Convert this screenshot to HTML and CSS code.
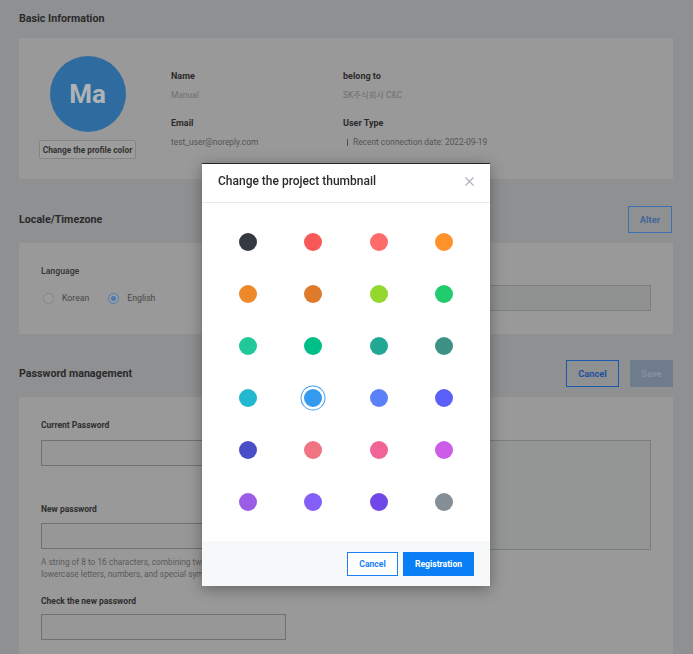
FILE: index.html
```html
<!DOCTYPE html>
<html lang="en">
<head>
<meta charset="utf-8">
<title>My Account</title>
<link rel="stylesheet" href="styles.css">
</head>
<body>
<div class="page">
  <section class="section">
    <div class="section-head first"><h2>Basic Information</h2></div>
    <div class="panel profile">
      <div class="avatar-col">
        <div class="avatar">Ma</div>
        <button class="btn-profile">Change the profile color</button>
      </div>
      <dl class="info">
        <div class="info-item"><dt>Name</dt><dd class="muted">Manual</dd></div>
        <div class="info-item"><dt>belong to</dt><dd class="muted">SK주식회사 C&amp;C</dd></div>
        <div class="info-item"><dt>Email</dt><dd>test_user@noreply.com</dd></div>
        <div class="info-item"><dt>User Type</dt><dd><span class="sep"></span>Recent connection date: 2022-09-19</dd></div>
      </dl>
    </div>
  </section>

  <section class="section">
    <div class="section-head"><h2>Locale/Timezone</h2><button class="btn-outline btn-alter">Alter</button></div>
    <div class="panel locale">
      <div class="col">
        <div class="label-plain">Language</div>
        <div class="radios">
          <label class="radio"><span class="radio-circle"></span><span>Korean</span></label>
          <label class="radio checked"><span class="radio-circle"><span class="radio-dot"></span></span><span>English</span></label>
        </div>
      </div>
      <div class="col">
        <div class="label-plain">Timezone</div>
        <div class="select-box"></div>
      </div>
    </div>
  </section>

  <section class="section">
    <div class="section-head"><h2>Password management</h2>
      <div class="head-actions">
        <button class="btn-outline btn-cancel">Cancel</button>
        <button class="btn-save">Save</button>
      </div>
    </div>
    <div class="panel password">
      <div class="col">
        <div class="field">
          <div class="field-label">Current Password</div>
          <div class="input"></div>
        </div>
        <div class="field field-new">
          <div class="field-label">New password</div>
          <div class="input"></div>
          <p class="hint">A string of 8 to 16 characters, combining two or more of uppercase,<br>lowercase letters, numbers, and special symbols.</p>
        </div>
        <div class="field field-check">
          <div class="field-label">Check the new password</div>
          <div class="input"></div>
        </div>
      </div>
      <div class="col">
        <div class="field-label">Guide</div>
        <div class="guide-box"></div>
      </div>
    </div>
  </section>
</div>

<div class="modal" role="dialog" aria-label="Change the project thumbnail">
  <div class="modal-head">
    <h3>Change the project thumbnail</h3>
    <svg class="close" width="9" height="9" viewBox="0 0 9 9" aria-hidden="true"><path d="M0.5 0.5L8.5 8.5M8.5 0.5L0.5 8.5" stroke="#a9b0b8" stroke-width="1.1" fill="none"/></svg>
  </div>
  <div class="modal-body">
    <span class="swatch"><span class="dot" style="background:#343a40"></span></span>
    <span class="swatch"><span class="dot" style="background:#f95858"></span></span>
    <span class="swatch"><span class="dot" style="background:#ff6b6b"></span></span>
    <span class="swatch"><span class="dot" style="background:#ff922b"></span></span>

    <span class="swatch"><span class="dot" style="background:#ed892b"></span></span>
    <span class="swatch"><span class="dot" style="background:#df7a2b"></span></span>
    <span class="swatch"><span class="dot" style="background:#94d82d"></span></span>
    <span class="swatch"><span class="dot" style="background:#21cc6e"></span></span>

    <span class="swatch"><span class="dot" style="background:#20c997"></span></span>
    <span class="swatch"><span class="dot" style="background:#00be87"></span></span>
    <span class="swatch"><span class="dot" style="background:#22a892"></span></span>
    <span class="swatch"><span class="dot" style="background:#3d9285"></span></span>

    <span class="swatch"><span class="dot" style="background:#22b8cf"></span></span>
    <span class="swatch"><span class="dot selected" style="background:#339af0"></span></span>
    <span class="swatch"><span class="dot" style="background:#5c80fa"></span></span>
    <span class="swatch"><span class="dot" style="background:#5c60fa"></span></span>

    <span class="swatch"><span class="dot" style="background:#4a4fc8"></span></span>
    <span class="swatch"><span class="dot" style="background:#f07482"></span></span>
    <span class="swatch"><span class="dot" style="background:#f06595"></span></span>
    <span class="swatch"><span class="dot" style="background:#cc5de8"></span></span>

    <span class="swatch"><span class="dot" style="background:#9b5de5"></span></span>
    <span class="swatch"><span class="dot" style="background:#845ef7"></span></span>
    <span class="swatch"><span class="dot" style="background:#7048e8"></span></span>
    <span class="swatch"><span class="dot" style="background:#868e96"></span></span>
  </div>
  <div class="modal-foot">
    <button class="mbtn mbtn-cancel">Cancel</button>
    <button class="mbtn mbtn-primary">Registration</button>
  </div>
</div>
</body>
</html>
```

FILE: styles.css
```css
html, body {
  margin: 0;
  height: 100%;
  overflow: hidden;
}
body {
  background: #8f9092;
  font-family: Roboto, "Noto Sans CJK KR", sans-serif;
  color: #2b2b2b;
}
button {
  font-family: Roboto, sans-serif;
  cursor: pointer;
  padding: 0;
}
.page {
  padding: 0 20px 0 19px;
}
.section + .section {
  margin-top: 27px;
}
.section:last-child {
  margin-top: 26px;
}
.section-head {
  display: flex;
  align-items: center;
  justify-content: space-between;
  height: 27px;
  margin-bottom: 10px;
}
.section-head.first {
  height: 24px;
  margin: 6px 0 8px;
}
h2 {
  margin: 0;
  font-size: 10.7px;
  font-weight: 700;
  color: #2a2a2a;
}
.panel {
  background: #999999;
}

/* profile */
.profile {
  display: flex;
  align-items: flex-start;
  padding: 18px 20px 20px 20px;
}
.avatar-col {
  display: flex;
  flex-direction: column;
  align-items: center;
  width: 97px;
}
.avatar {
  width: 76px;
  height: 76px;
  border-radius: 50%;
  background: #2e6b9f;
  color: #b0b3b6;
  font-size: 26px;
  font-weight: 700;
  display: flex;
  align-items: center;
  justify-content: center;
}
.btn-profile {
  margin-top: 8px;
  width: 97px;
  height: 19px;
  background: #9d9d9d;
  border: 1px solid #858585;
  border-radius: 2px;
  font-size: 8.3px;
  font-weight: 700;
  color: #333;
}
.info {
  margin: 14px 0 0 35px;
  display: grid;
  grid-template-columns: 172px 172px;
  row-gap: 16px;
}
.info dt {
  font-size: 9px;
  line-height: 12px;
  font-weight: 700;
  color: #2b2b2b;
}
.info dd {
  margin: 7px 0 0;
  font-size: 8.4px;
  line-height: 12px;
  color: #545454;
  display: flex;
  align-items: center;
}
.info dd.muted {
  color: #6f6f6f;
}
.sep {
  display: inline-block;
  width: 1px;
  height: 7px;
  background: #4d4d4d;
  margin: 0 5px 0 4px;
}

/* locale */
.locale {
  display: grid;
  grid-template-columns: 1fr 1fr;
  column-gap: 20px;
  align-items: start;
  padding: 22px 22px 23px;
}
.label-plain {
  font-size: 8.7px;
  line-height: 12px;
  font-weight: 500;
  color: #333;
}
.radios {
  display: flex;
  align-items: center;
  height: 14px;
  margin-top: 14px;
  padding-left: 2px;
}
.radio {
  display: flex;
  align-items: center;
  gap: 8px;
  margin-right: 19px;
  font-size: 8.7px;
  color: #474747;
}
.radio-circle {
  width: 11px;
  height: 11px;
  box-sizing: border-box;
  border-radius: 50%;
  border: 1px solid #878787;
  background: #9c9c9c;
  display: flex;
  align-items: center;
  justify-content: center;
}
.radio.checked .radio-circle {
  border-color: #507bb5;
}
.radio-dot {
  width: 5px;
  height: 5px;
  border-radius: 50%;
  background: #4a79b6;
}
.select-box {
  margin-top: 8px;
  height: 26px;
  box-sizing: border-box;
  border: 1px solid #7e7e7e;
  background: #909191;
}
.btn-outline {
  height: 27px;
  background: transparent;
  font-size: 9.3px;
  font-weight: 700;
}
.btn-alter {
  width: 44px;
  border: 1px solid #3d6fb5;
  color: #45689a;
  margin-right: 1px;
}
.head-actions {
  display: flex;
  gap: 11px;
}
.btn-cancel {
  width: 53px;
  border: 1px solid #1a58b0;
  color: #22519c;
}
.btn-save {
  width: 43px;
  height: 27px;
  border: none;
  background: #6e7c8b;
  color: #8491a0;
  font-size: 9.3px;
  font-weight: 700;
}

/* password */
.password {
  display: grid;
  grid-template-columns: 245px 1fr;
  column-gap: 20px;
  align-items: start;
  padding: 22px 22px 30px;
}
.field-label {
  font-size: 8.5px;
  line-height: 12px;
  font-weight: 700;
  color: #2e2e2e;
}
.input {
  margin-top: 9px;
  height: 26px;
  box-sizing: border-box;
  border: 1px solid #707070;
  background: #979797;
}
.field-new {
  margin-top: 37px;
}
.field-new .input {
  margin-top: 8px;
}
.field-check {
  margin-top: 15px;
}
.field-check .input {
  margin-top: 7px;
}
.hint {
  margin: 8px 0 0;
  font-size: 8.3px;
  line-height: 11.5px;
  color: #5a5a5a;
  white-space: nowrap;
}
.guide-box {
  margin-top: 9px;
  height: 110px;
  box-sizing: border-box;
  border: 1px solid #7b7d7c;
  background: #939695;
}

/* modal */
.modal {
  position: fixed;
  left: 202px;
  top: 163px;
  width: 288px;
  background: #fff;
  border-top: 1px solid #262626;
  box-shadow: 0 3px 14px rgba(0, 0, 0, 0.35);
}
.modal-head {
  box-sizing: border-box;
  height: 39px;
  display: flex;
  align-items: center;
  justify-content: space-between;
  padding: 0 16px 4px 16px;
  border-bottom: 1px solid #e6e8eb;
}
.modal-head h3 {
  margin: 0;
  font-size: 12px;
  font-weight: 500;
  color: #2b2b2b;
}
.close {
  display: block;
}
.modal-body {
  padding: 13px 0;
  display: grid;
  grid-template-columns: repeat(4, 65.33px);
  grid-auto-rows: 52px;
  justify-content: center;
}
.swatch {
  display: flex;
  align-items: center;
  justify-content: center;
}
.dot {
  width: 18px;
  height: 18px;
  border-radius: 50%;
}
.dot.selected {
  box-shadow: 0 0 0 2.5px #fff, 0 0 0 3.5px #3d9bf0;
}
.modal-foot {
  height: 45px;
  background: #f7f8fa;
  display: flex;
  justify-content: flex-end;
  align-items: center;
  gap: 5px;
  padding-right: 16px;
}
.mbtn {
  height: 24px;
  font-size: 8.6px;
  font-weight: 700;
}
.mbtn-cancel {
  width: 51px;
  background: #fff;
  border: 1px solid #1a7ff5;
  color: #1a7ff5;
}
.mbtn-primary {
  width: 71px;
  background: #0a7ff5;
  border: 1px solid #0a7ff5;
  color: #fff;
}
```
